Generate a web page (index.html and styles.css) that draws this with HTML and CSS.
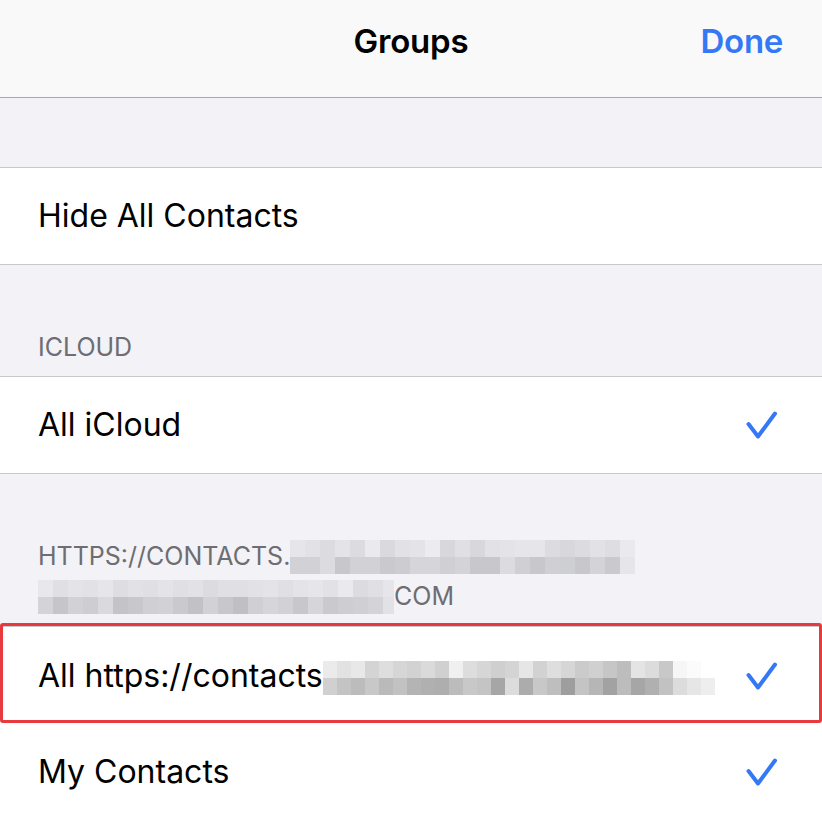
FILE: index.html
```html
<!DOCTYPE html>
<html lang="en">
<head>
<meta charset="utf-8">
<title>Groups</title>
<link rel="stylesheet" href="styles.css">
</head>
<body>
<div class="screen">
  <header class="nav">
    <div class="nav-side"></div>
    <div class="nav-title">Groups</div>
    <div class="nav-side nav-done">Done</div>
  </header>

  <div class="spacer"></div>

  <div class="group">
    <div class="row"><span class="label">Hide All Contacts</span></div>
  </div>

  <div class="section-header">ICLOUD</div>

  <div class="group">
    <div class="row">
      <span class="label">All iCloud</span>
      <svg class="check" viewBox="0 0 34 30" width="34" height="30"><path d="M3.5 14 L13 26.5 L30 3.5"/></svg>
    </div>
  </div>

  <div class="section-header section-header--tall">HTTPS://CONTACTS.<span class="pix pix-h1"></span><br><span class="pix pix-h2"></span>COM</div>

  <div class="group">
    <div class="row row--highlight">
      <span class="label">All https://contacts<span class="pix pix-row"></span></span>
      <svg class="check" viewBox="0 0 34 30" width="34" height="30"><path d="M3.5 14 L13 26.5 L30 3.5"/></svg>
    </div>
    <div class="row">
      <span class="label">My Contacts</span>
      <svg class="check" viewBox="0 0 34 30" width="34" height="30"><path d="M3.5 14 L13 26.5 L30 3.5"/></svg>
    </div>
  </div>
</div>
</body>
</html>
```

FILE: styles.css
```css
html, body {
  margin: 0;
  padding: 0;
}

body {
  background: #f2f2f7;
  font-family: Inter, "Noto Sans", "Liberation Sans", sans-serif;
  color: #000;
  -webkit-font-smoothing: antialiased;
}

.screen {
  width: 822px;
  height: 820px;
  overflow: hidden;
}

/* Navigation bar */
.nav {
  height: 98px;
  box-sizing: border-box;
  border-bottom: 1px solid #a9a9ad;
  background: #f9f9f9;
  display: grid;
  grid-template-columns: 1fr auto 1fr;
  align-items: start;
  padding-top: 21px;
}

.nav-title {
  font-size: 33px;
  font-weight: 600;
  line-height: 40px;
  letter-spacing: -0.2px;
}

.nav-done {
  justify-self: end;
  padding-right: 39px;
  font-size: 33px;
  font-weight: 600;
  line-height: 40px;
  letter-spacing: -0.3px;
  color: #3478f6;
}

.spacer {
  height: 69px;
}

/* Grouped table */
.group {
  background: #fff;
  border-top: 1px solid #c8c7cc;
  border-bottom: 1px solid #c8c7cc;
}

.row {
  position: relative;
  height: 96px;
  display: flex;
  align-items: center;
  justify-content: space-between;
  padding: 0 43px 0 38px;
}

.row--highlight {
  height: 97px;
}

.row--highlight::after {
  content: "";
  position: absolute;
  left: 0;
  right: 0;
  top: -4px;
  bottom: 1px;
  border: 3px solid #e8393d;
  border-radius: 3px;
  pointer-events: none;
}

.label {
  font-size: 32px;
  line-height: 40px;
  white-space: nowrap;
}

.check {
  display: block;
  flex: none;
}

.check path {
  fill: none;
  stroke: #3478f6;
  stroke-width: 4;
  stroke-linecap: round;
  stroke-linejoin: round;
}

/* Section headers */
.section-header {
  padding: 62px 38px 9px;
  font-size: 25px;
  line-height: 40px;
  color: #6d6d72;
  white-space: nowrap;
}

.section-header--tall {
  padding-bottom: 10px;
}

/* Pixelated (redacted) blocks */
.pix {
  display: inline-block;
  background-repeat: no-repeat;
  background-size: 100% 50%;
  background-position: left top, left bottom;
}

.pix-h1 {
  width: 345px;
  height: 34px;
  vertical-align: -9px;
  background-image:
    linear-gradient(90deg, #e6e6ea 0 15px, #e2e2e6 15px 30px, #dcdce0 30px 45px, #e4e4e8 45px 60px, #dcdce0 60px 75px, #eaeaee 75px 90px, #dadade 90px 105px, #e2e2e6 105px 120px, #e4e4e8 120px 135px, #ececf0 135px 150px, #d8d8dc 150px 165px, #e0e0e4 165px 180px, #d8d8dc 180px 195px, #e2e2e6 195px 210px, #e4e4e8 210px 225px, #e6e6ea 225px 240px, #e6e6ea 240px 255px, #dcdce0 255px 270px, #d8d8dc 270px 285px, #dcdce0 285px 300px, #e2e2e6 300px 315px, #dedee2 315px 330px, #eaeaee 330px 345px),
    linear-gradient(90deg, #d2d2d6 0 15px, #d2d2d6 15px 30px, #dcdce0 30px 45px, #c8c8cc 45px 60px, #d2d2d6 60px 75px, #d2d2d6 75px 90px, #cacace 90px 105px, #cdcdd1 105px 120px, #d6d6da 120px 135px, #d6d6da 135px 150px, #d0d0d4 150px 165px, #d4d4d8 165px 180px, #c8c8cc 180px 195px, #c8c8cc 195px 210px, #dcdce0 210px 225px, #d0d0d4 225px 240px, #c8c8cc 240px 255px, #d0d0d4 255px 270px, #cecfd2 270px 285px, #c8c8cc 285px 300px, #d4d4d8 300px 315px, #cacace 315px 330px, #e6e6ea 330px 345px);
}

.pix-h2 {
  width: 356px;
  height: 34px;
  vertical-align: -9px;
  background-image:
    linear-gradient(90deg, #e8e8ec 0 15px, #e0e0e4 15px 30px, #e4e4e8 30px 45px, #e2e2e6 45px 60px, #e6e6ea 60px 75px, #dedee2 75px 90px, #e2e2e6 90px 105px, #e0e0e4 105px 120px, #e4e4e8 120px 135px, #e0e0e4 135px 150px, #e2e2e6 150px 165px, #dcdce0 165px 180px, #e0e0e4 180px 195px, #e0e0e4 195px 210px, #e2e2e6 210px 225px, #e4e4e8 225px 240px, #e0e0e4 240px 255px, #e4e4e8 255px 270px, #e6e6ea 270px 285px, #e2e2e6 285px 300px, #eaeaee 300px 315px, #dcdce0 315px 330px, #e0e0e4 330px 345px, #e6e6ea 345px 360px),
    linear-gradient(90deg, #d4d4d8 0 15px, #c6c6ca 15px 30px, #d2d2d6 30px 45px, #ceced2 45px 60px, #dadade 60px 75px, #c4c4c8 75px 90px, #c8c8cc 90px 105px, #d0d0d4 105px 120px, #d2d2d6 120px 135px, #cacace 135px 150px, #c2c2c6 150px 165px, #d2d2d6 165px 180px, #c8c8cc 180px 195px, #c0c0c4 195px 210px, #d0d0d4 210px 225px, #d6d6da 225px 240px, #d2d2d6 240px 255px, #c8c8cc 255px 270px, #d6d6da 270px 285px, #cacace 285px 300px, #ceced2 300px 315px, #d0d0d4 315px 330px, #d4d4d8 330px 345px, #e2e2e6 345px 360px);
}

.pix-row {
  width: 392px;
  height: 34px;
  vertical-align: -8px;
  background-image:
    linear-gradient(90deg, #ebebeb 0 14px, #e2e2e2 14px 28px, #e8e8e8 28px 42px, #d4d4d4 42px 56px, #dedede 56px 70px, #d6d6d6 70px 84px, #d2d2d2 84px 98px, #dadada 98px 112px, #d0d0d0 112px 126px, #f0f0f0 126px 140px, #dddddd 140px 154px, #d6d6d6 154px 168px, #cfcfcf 168px 182px, #d4d4d4 182px 196px, #e6e6e6 196px 210px, #d2d2d2 210px 224px, #dedede 224px 238px, #d6d6d6 238px 252px, #cbcbcb 252px 266px, #d0d0d0 266px 280px, #c6c6c6 280px 294px, #bdbdbd 294px 308px, #e4e4e4 308px 322px, #dcdcdc 322px 336px, #c8c8c8 336px 350px, #f6f6f6 350px 364px, #fbfbfb 364px 378px, #ffffff 378px 392px),
    linear-gradient(90deg, #d0d0d0 0 14px, #c4c4c4 14px 28px, #bcbcbc 28px 42px, #c8c8c8 42px 56px, #bababa 56px 70px, #c2c2c2 70px 84px, #b4b4b4 84px 98px, #b0b0b0 98px 112px, #aeaeae 112px 126px, #bcbcbc 126px 140px, #c8c8c8 140px 154px, #c4c4c4 154px 168px, #a6a6a6 168px 182px, #dcdcdc 182px 196px, #acacac 196px 210px, #c8c8c8 210px 224px, #bebebe 224px 238px, #9e9e9e 238px 252px, #c4c4c4 252px 266px, #b6b6b6 266px 280px, #a2a2a2 280px 294px, #bcbcbc 294px 308px, #a6a6a6 308px 322px, #b0b0b0 322px 336px, #c2c2c2 336px 350px, #dcdcdc 350px 364px, #e6e6e6 364px 378px, #eeeeee 378px 392px);
}
```
